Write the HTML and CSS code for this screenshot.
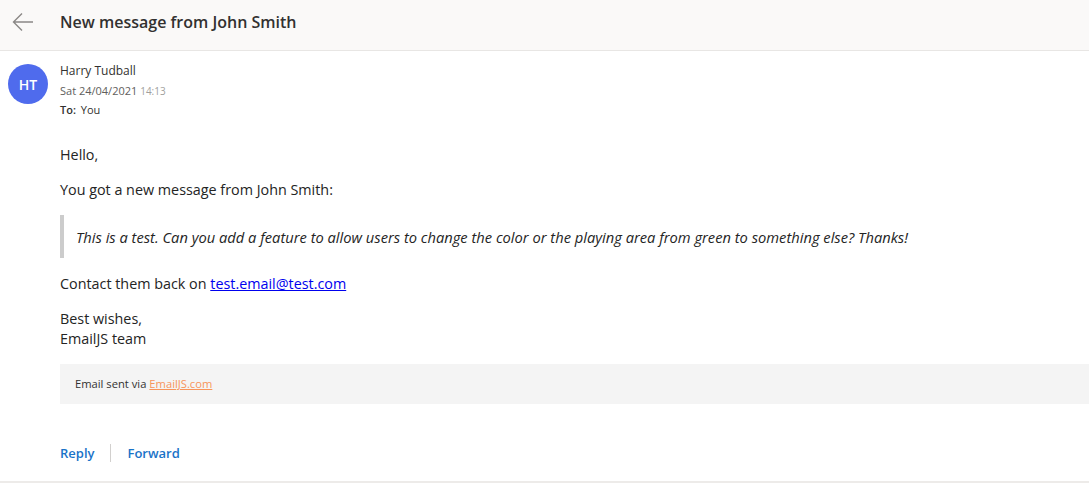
FILE: index.html
```html
<!DOCTYPE html>
<html>
<head>
<meta charset="utf-8">
<link rel="stylesheet" href="styles.css">
</head>
<body>
<div class="page">
  <header class="topbar">
    <button class="back" aria-label="Back">
      <svg width="22" height="20" viewBox="0 0 22 20"><path d="M21 10H2M10 1.5L1.5 10L10 18.5" fill="none" stroke="#8a8886" stroke-width="1.4"/></svg>
    </button>
    <h1 class="title">New message from John Smith</h1>
  </header>
  <section class="message">
    <div class="meta">
      <div class="avatar">HT</div>
      <div class="meta-text">
        <div class="sender">Harry Tudball</div>
        <div class="date">Sat 24/04/2021 <span class="time">14:13</span></div>
        <div class="to"><span class="to-label">To:</span> You</div>
      </div>
    </div>
    <div class="body">
      <p>Hello,</p>
      <p>You got a new message from John Smith:</p>
      <blockquote class="quote">This is a test. Can you add a feature to allow users to change the color or the playing area from green to something else? Thanks!</blockquote>
      <p>Contact them back on <a class="mail" href="#">test.email@test.com</a></p>
      <p>Best wishes,<br>EmailJS team</p>
      <div class="footer-note">Email sent via <a class="ejs" href="#">EmailJS.com</a></div>
    </div>
    <div class="actions">
      <a class="action" href="#">Reply</a>
      <span class="sep"></span>
      <a class="action" href="#">Forward</a>
    </div>
  </section>
</div>
</body>
</html>
```
FILE: styles.css
```css
* { box-sizing: border-box; }
html, body { margin: 0; padding: 0; background: #fff; }
body { font-family: "Open Sans", "Noto Sans", sans-serif; color: #323130; }
.page { width: 1089px; height: 485px; overflow: hidden; }
.topbar {
  height: 51px;
  background: #faf9f8;
  border-bottom: 1px solid #e8e6e4;
  display: flex;
  align-items: center;
  padding: 0 0 7px 12px;
}
.back { background: none; border: 0; padding: 0; width: 22px; height: 20px; display: flex; }
.title { margin: 0 0 0 26px; font-size: 16px; font-weight: 600; color: #323130; }
.message { border-bottom: 2px solid #edebe9; height: 432px; }
.meta { display: flex; padding: 12px 0 0 8px; gap: 12px; }
.avatar {
  width: 40px; height: 40px; border-radius: 50%;
  background: #4f6bed; color: #fff;
  display: flex; align-items: center; justify-content: center;
  font-size: 14px; font-weight: 600; margin-top: 1px;
}
.meta-text { display: flex; flex-direction: column; }
.sender { font-size: 12px; line-height: 16px; color: #323130; }
.date { font-size: 11px; line-height: 16px; color: #605e5c; margin-top: 4px; }
.time { color: #a19f9d; font-size: 10px; }
.to { font-size: 11px; line-height: 16px; color: #323130; margin-top: 3px; }
.to-label { font-weight: 600; margin-right: 2px; }
.body { padding: 27px 0 0 60px; font-size: 14.35px; line-height: 20px; color: #242424; }
.body p { margin: 0 0 15px; }
.quote {
  margin: 0 0 16px;
  border-left: 4px solid #ccc;
  padding: 12px 0 11px 12px;
  font-style: italic;
  font-size: 14.7px;
}
.mail { color: #0000ee; text-decoration: underline; }
.footer-note {
  margin-top: 5px;
  background: #f4f4f4;
  height: 40px;
  display: flex; align-items: center;
  padding-left: 15px;
  font-size: 11.2px; color: #323130;
}
.ejs { color: #f7955b; text-decoration: underline; margin-left: 3px; }
.actions { display: flex; align-items: center; padding: 40px 0 0 60px; }
.action { color: #1a73c8; text-decoration: none; font-size: 13px; font-weight: 600; }
.sep { width: 1px; height: 18px; background: #d2d0ce; margin: 0 16px 0 16px; }
```
